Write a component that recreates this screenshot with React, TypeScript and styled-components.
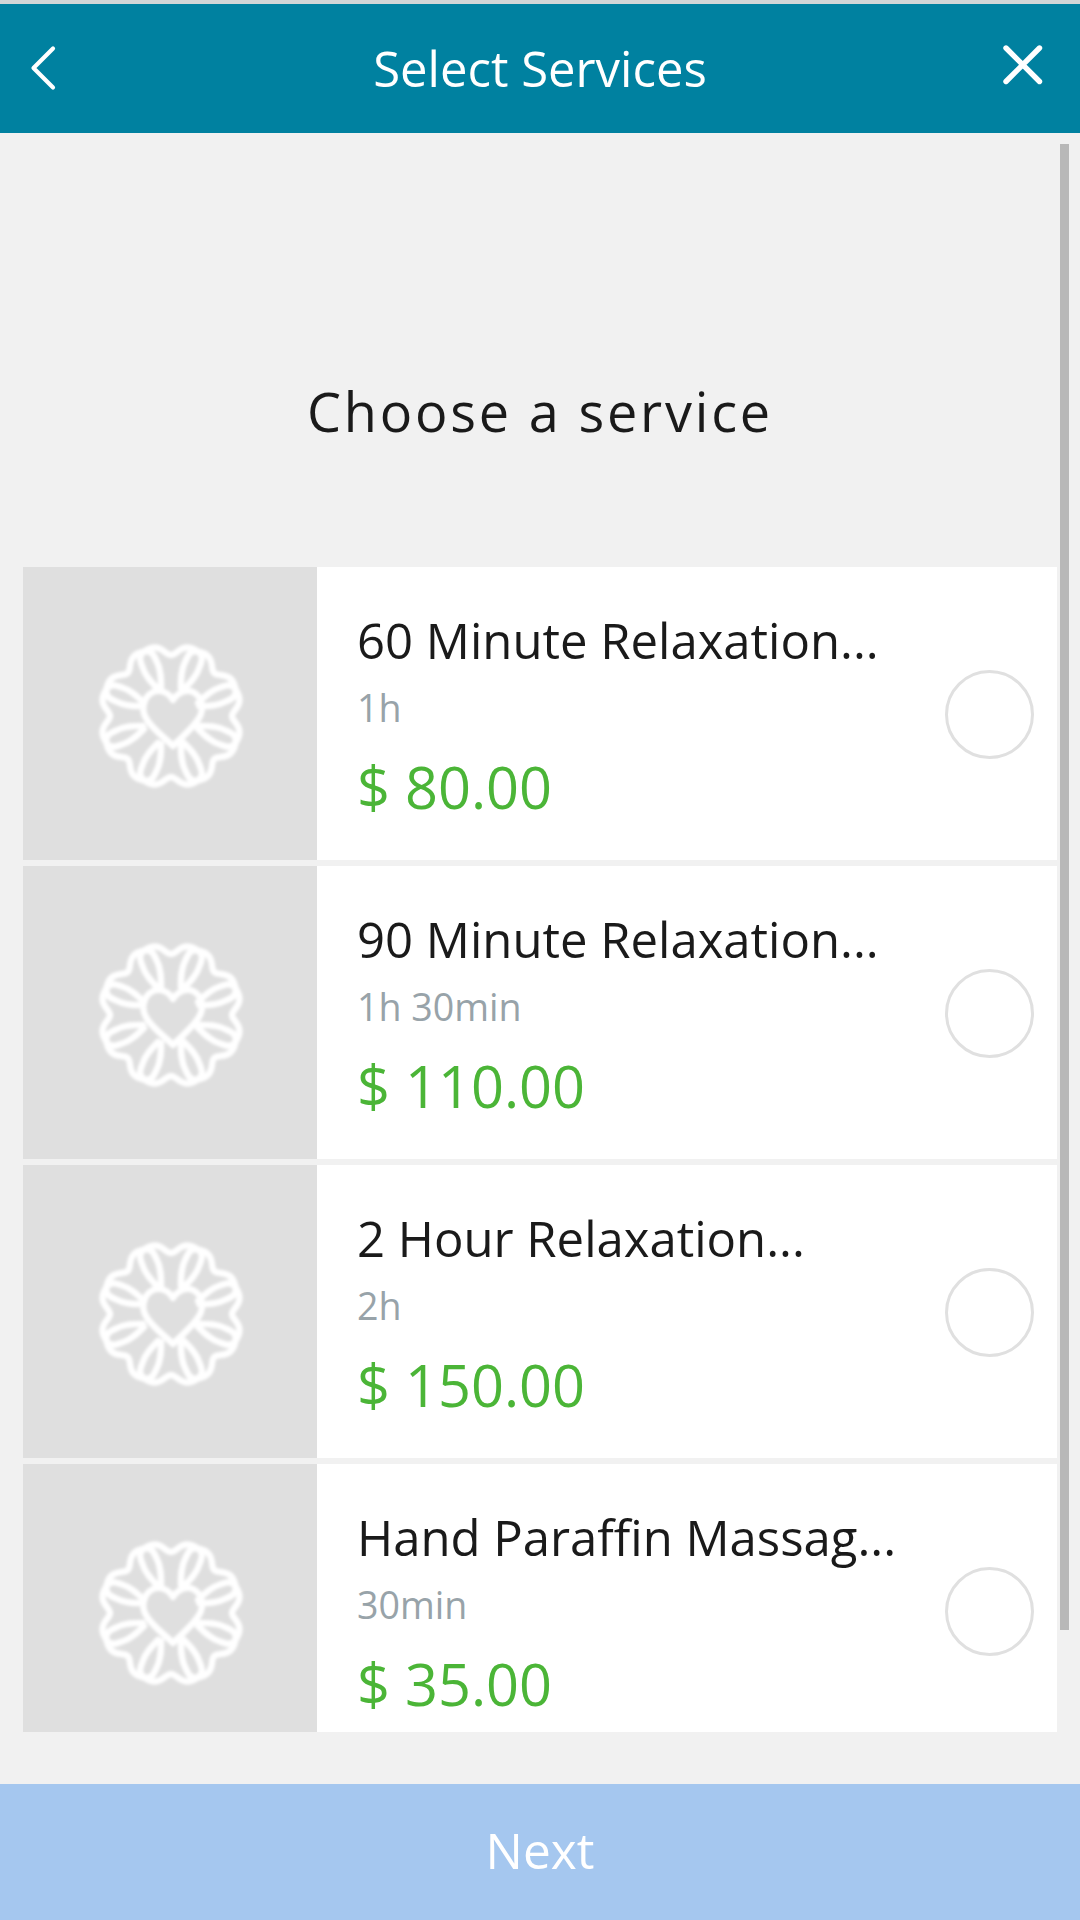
import React, { useState } from "react";
import styled, { createGlobalStyle } from "styled-components";

const GlobalStyle = createGlobalStyle`
  *, *::before, *::after { box-sizing: border-box; }
  body {
    margin: 0;
    background: #f1f1f1;
    font-family: "Open Sans", "Noto Sans", sans-serif;
    font-weight: 400;
  }
  button { font: inherit; }
`;

const Screen = styled.div`
  display: flex;
  flex-direction: column;
  width: 1080px;
  height: 1920px;
  overflow: hidden;
  background: #f1f1f1;
  color: #1a1a1a;
`;

const Header = styled.header`
  display: grid;
  grid-template-columns: 120px 1fr 120px;
  align-items: center;
  flex: none;
  height: 133px;
  padding-bottom: 2px;
  border-top: 4px solid #d2d6d7;
  background: #0081a0;
  color: #fff;
`;

const HeaderTitle = styled.h1`
  margin: 0;
  font-size: 49px;
  font-weight: 400;
  line-height: 66px;
  text-align: center;
`;

const HeaderButton = styled.button<{ $align: "start" | "end" }>`
  display: flex;
  justify-content: ${(p) => (p.$align === "start" ? "flex-start" : "flex-end")};
  align-items: center;
  height: 100%;
  padding: ${(p) => (p.$align === "start" ? "0 0 0 28px" : "0 34px 6px 0")};
  border: 0;
  background: none;
  color: inherit;
`;

const Body = styled.main`
  display: flex;
  flex: none;
  gap: 3px;
  height: 1599px;
  margin-bottom: 52px;
  padding-left: 23px;
  overflow: hidden;
`;

const Content = styled.section`
  flex: none;
  width: 1034px;
`;

const Heading = styled.h2`
  height: 434px;
  margin: 0;
  padding-top: 241px;
  font-size: 54px;
  font-weight: 400;
  line-height: 74px;
  letter-spacing: 2.8px;
  text-align: center;
`;

const ServiceList = styled.ul`
  display: flex;
  flex-direction: column;
  gap: 6px;
  margin: 0;
  padding: 0;
  list-style: none;
`;

const ServiceRow = styled.li`
  display: flex;
  height: 293px;
  padding-right: 23px;
  background: #fff;
`;

const Thumb = styled.div`
  display: flex;
  align-items: center;
  justify-content: center;
  flex: none;
  width: 293.5px;
  padding-bottom: 2px;
  background: #dfdfdf;
`;

const Details = styled.div`
  display: flex;
  flex-direction: column;
  flex: 1;
  min-width: 0;
  padding: 40px 0 0 40.5px;
  white-space: nowrap;
`;

const ServiceName = styled.h3`
  margin: 0;
  font-size: 49.05px;
  font-weight: 400;
  line-height: 66px;
`;

const Duration = styled.span`
  margin-top: 10px;
  color: #98a3a9;
  font-size: 37.6px;
  line-height: 50px;
`;

const Price = styled.span`
  margin-top: 15px;
  color: #4bb537;
  font-size: 57.7px;
  line-height: 78px;
`;

const Radio = styled.button`
  align-self: center;
  flex: none;
  width: 89px;
  height: 89px;
  margin-top: 2px;
  padding: 0;
  border: 3px solid #e0e0e0;
  border-radius: 50%;
  background: ${(p) => (p["aria-checked"] ? "#4bb537" : "#fff")};
`;

const ScrollThumb = styled.div`
  flex: none;
  width: 9px;
  height: 1486px;
  margin-top: 11px;
  background: #b8b8b8;
`;

const NextButton = styled.button`
  flex: 1;
  padding: 0 0 5px;
  border: 0;
  background: #a5c7ef;
  color: #fff;
  font-size: 49.6px;
  line-height: 66px;
`;

const PETAL =
  "M0 -61 C5 -61 8 -68.5 16 -68.5 C20 -68.5 23 -67 26 -65 C33 -61 31 -55 28.5 -49 C26 -40 19 -33 13 -27 M0 -61 C-5 -61 -8 -68.5 -16 -68.5 C-20 -68.5 -23 -67 -26 -65 C-33 -61 -31 -55 -28.5 -49 C-26 -40 -19 -33 -13 -27";

const FlowerLogo = () => (
  <svg width="156" height="156" viewBox="-79 -81 156 156" aria-hidden="true">
    <defs>
      <filter id="soft" x="-10%" y="-10%" width="120%" height="120%">
        <feGaussianBlur stdDeviation="1.7" />
      </filter>
    </defs>
    <g fill="none" stroke="#fff" strokeWidth="6.4" strokeLinecap="round" strokeLinejoin="round" filter="url(#soft)">
      {[0, 45, 90, 135, 180, 225, 270, 315].map((angle) => (
        <path key={angle} d={PETAL} transform={`rotate(${angle})`} />
      ))}
      <path d="M2 -16 C7 -24 16 -27 22 -24 C32 -19 33 -6 28 2 C22 12 12 20 2 30 C-8 20 -20 12 -25 2 C-30 -6 -28 -19 -18 -24 C-11 -27 -3 -24 2 -16 Z" />
    </g>
  </svg>
);

const services = [
  { name: "60 Minute Relaxation...", duration: "1h", price: "$ 80.00" },
  { name: "90 Minute Relaxation...", duration: "1h 30min", price: "$ 110.00" },
  { name: "2 Hour Relaxation...", duration: "2h", price: "$ 150.00" },
  { name: "Hand Paraffin Massag...", duration: "30min", price: "$ 35.00" },
];

export default function App() {
  const [selected, setSelected] = useState<string | null>(null);
  return (
    <>
      <GlobalStyle />
      <Screen>
        <Header>
          <HeaderButton $align="start" aria-label="Back">
            <svg width="30" height="46" viewBox="0 0 30 46" fill="none" stroke="#fff" strokeWidth="4.2" strokeLinecap="round" strokeLinejoin="round">
              <path d="M25 3.5 L5.5 23 L25 42.5" />
            </svg>
          </HeaderButton>
          <HeaderTitle>Select Services</HeaderTitle>
          <HeaderButton $align="end" aria-label="Close">
            <svg width="46" height="46" viewBox="0 0 46 46" fill="none" stroke="#fff" strokeWidth="5.4" strokeLinecap="round">
              <path d="M6 6 L39.5 39.5 M39.5 6 L6 39.5" />
            </svg>
          </HeaderButton>
        </Header>
        <Body>
          <Content>
            <Heading>Choose a service</Heading>
            <ServiceList>
              {services.map((s) => (
                <ServiceRow key={s.name}>
                  <Thumb>
                    <FlowerLogo />
                  </Thumb>
                  <Details>
                    <ServiceName>{s.name}</ServiceName>
                    <Duration>{s.duration}</Duration>
                    <Price>{s.price}</Price>
                  </Details>
                  <Radio role="radio" aria-label={s.name} aria-checked={selected === s.name} onClick={() => setSelected(s.name)} />
                </ServiceRow>
              ))}
            </ServiceList>
          </Content>
          <ScrollThumb />
        </Body>
        <NextButton>Next</NextButton>
      </Screen>
    </>
  );
}
